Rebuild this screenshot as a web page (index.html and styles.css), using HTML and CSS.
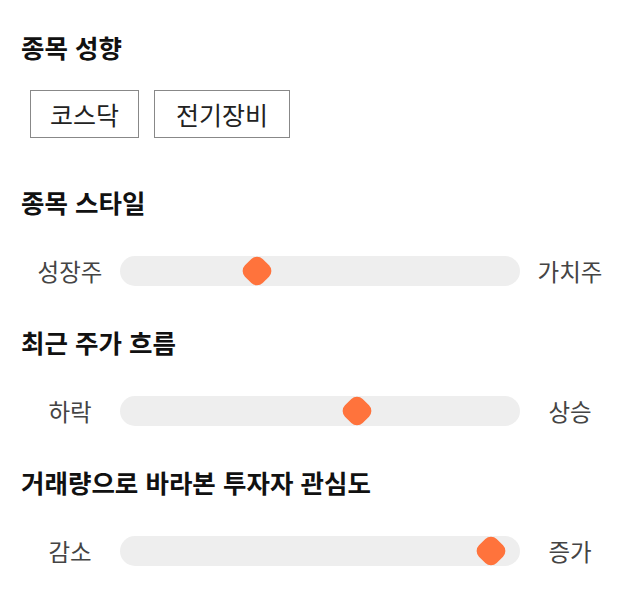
FILE: index.html
```html
<!DOCTYPE html>
<html lang="ko">
<head>
<meta charset="UTF-8">
<meta name="viewport" content="width=device-width, initial-scale=1.0">
<title>종목 성향</title>
<link rel="stylesheet" href="styles.css">
</head>
<body>

<!-- 종목 성향 -->
<section class="group group-tags">
  <h2 class="group-title">종목 성향</h2>
  <div class="tags">
    <span class="tag">코스닥</span>
    <span class="tag">전기장비</span>
  </div>
</section>

<!-- 종목 스타일 -->
<section class="group">
  <h2 class="group-title">종목 스타일</h2>
  <div class="scale">
    <span class="scale-label">성장주</span>
    <div class="track"><div class="rail"><span class="thumb" style="left:33%"></span></div></div>
    <span class="scale-label">가치주</span>
  </div>
</section>

<!-- 최근 주가 흐름 -->
<section class="group">
  <h2 class="group-title">최근 주가 흐름</h2>
  <div class="scale">
    <span class="scale-label">하락</span>
    <div class="track"><div class="rail"><span class="thumb" style="left:60%"></span></div></div>
    <span class="scale-label">상승</span>
  </div>
</section>

<!-- 거래량 -->
<section class="group">
  <h2 class="group-title">거래량으로 바라본 투자자 관심도</h2>
  <div class="scale">
    <span class="scale-label">감소</span>
    <div class="track"><div class="rail"><span class="thumb" style="left:96%"></span></div></div>
    <span class="scale-label">증가</span>
  </div>
</section>

</body>
</html>
```

FILE: styles.css
```css
body {
  margin: 0;
  padding: 32px 20px 0 21px;
  background: #fff;
  font-family: 'Noto Sans CJK KR', 'Noto Sans', sans-serif;
  color: #111;
}
.group {
  margin-bottom: 41px;
}
.group-tags {
  margin-bottom: 49px;
}
.group-title {
  margin: 0;
  height: 30px;
  line-height: 30px;
  font-size: 25.5px;
  font-weight: 700;
  color: #111;
}
/* Tags */
.tags {
  display: flex;
  gap: 15px;
  margin-top: 28px;
  padding-left: 9px;
}
.tag {
  display: flex;
  align-items: center;
  height: 48px;
  box-sizing: border-box;
  padding: 0 19px;
  border: 1px solid #888;
  font-size: 25px;
  color: #222;
}
.tag + .tag {
  padding: 0 21px;
}
/* Slider scale */
.scale {
  display: flex;
  align-items: center;
  height: 30px;
  margin-top: 39px;
  margin-left: -1px;
}
.scale-label {
  width: 100px;
  line-height: 30px;
  text-align: center;
  font-size: 23.5px;
  color: #444;
}
.track {
  flex: 1;
  height: 30px;
  background: #eee;
  border-radius: 15px;
}
.rail {
  position: relative;
  height: 100%;
  margin: 0 14.5px;
}
.thumb {
  position: absolute;
  top: 50%;
  width: 25px;
  height: 25px;
  background: #ff733c;
  border-radius: 8px;
  transform: translate(-50%, -50%) rotate(45deg);
}
```
